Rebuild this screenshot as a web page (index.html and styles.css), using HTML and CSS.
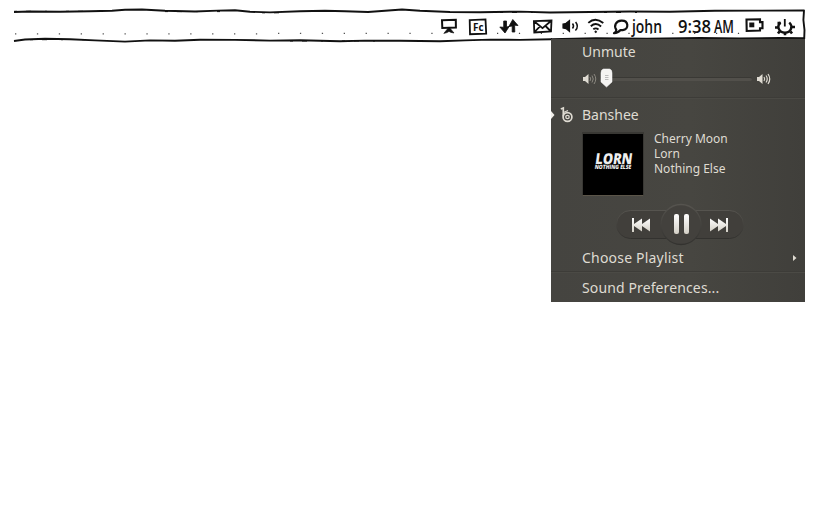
FILE: index.html
```html
<!DOCTYPE html>
<html lang="en">
<head>
<meta charset="utf-8">
<title>Sound menu</title>
<link rel="stylesheet" href="styles.css">
</head>
<body>
<header class="bar">
  <svg class="frame" width="825" height="50" viewBox="0 0 825 50" fill="none" stroke="#111">
    <path stroke-width="1.9" stroke-linejoin="round" d="M14 12L30 11.500 60 11.700 90 11.300 112 10.800 125 9.800 142 9.500 165 10.700 195 11.500 218 10.600 235 10.300 250 11.800 270 12.400 300 11.300 325 10.700 345 11.200 368 12 385 10.700 402 9.500 420 10.800 450 12 480 12.200 520 11.600 550 12.500 590 12 630 11.500 670 11.800 715 10.800 760 10.600 804 10.400 803.400 20 804.500 30 804.200 39"/>
    <path stroke-width="1.9" d="M14 41L25 39.500 45 38.700 70 39.200 95 40.400 125 41.600 150 40.400 175 40.700 200 39.800 235 39.900 270 40.600 300 40.200 320 40.700 340 41.300 365 40.600 400 40.800 440 41.200 465 40.400 490 39.600 520 39.900 552 39.200"/>
    <path stroke-width="1.8" d="M551 39.200L596 38.200 647 38.600 700 37.800 740 38.400 780 37.900 804 38.200"/>
    <path stroke-width="1" stroke-dasharray="3 9 5 14 2 19" d="M14 11.300h90M165 11.600h60M262 12.800h30M500 12.500h150M30 39.700h60M290 41h100"/>
    <path stroke="#555" stroke-width="1.300" stroke-dasharray="1.300 20.600" d="M15 33.900h255M278 33.400h160"/>
    <path stroke="#444" stroke-width="1.200" stroke-dasharray="1.200 20.700" d="M497 33.300h250"/>
  </svg>
  <div class="tray">
    <svg class="i-screen" width="18" height="18" viewBox="0 0 18 18"><path d="M2 2.300L15.800 1.800 15.900 9.500 2.300 10z" fill="none" stroke="#111" stroke-width="2"/><path d="M9 9l5 6-3-.6-2-1-2 1.200-3.200.8z" fill="#111" stroke="#111" stroke-width=".6"/></svg>
    <svg class="i-fc" width="20" height="18" viewBox="0 0 20 18"><path d="M1.700 2.200L17.500 1.400 18.200 15.600 2 16.200z" fill="none" stroke="#111" stroke-width="1.800"/><text x="5" y="13" textLength="10.500" lengthAdjust="spacingAndGlyphs" class="hand small">Fc</text></svg>
    <svg class="i-arrows" width="20" height="18" viewBox="0 0 20 18"><path d="M4.700 3h2.800v6l2.700-.6L6 15 .8 9 4.700 9.300zM13.800 1.500L19 7.500l-3.400-.3.200 6.800h-2.600V8L9.800 8.600z" fill="#111" stroke="#111" stroke-width=".8" stroke-linejoin="round"/></svg>
    <svg class="i-mail" width="20" height="16" viewBox="0 0 20 16" fill="none" stroke="#111" stroke-width="1.800"><path d="M.9 2.200L18.500 1.500 18 12.500 1.300 13.500zM2 3l7.500 6.200L18 2M1.500 13l5.500-5.700M18 12.500l-5-5"/></svg>
    <svg class="i-vol" width="17" height="16" viewBox="0 0 17 16"><path d="M1 6l2.500-.4L7.500 2.500v11L4 10.600 1 10z" fill="#111" stroke="#111" stroke-width="1.200"/><path d="M10.500 5.500q2 2.500 0 5M13.600 4q3.600 4.500-.2 8.500" fill="none" stroke="#111" stroke-width="1.500"/></svg>
    <svg class="i-wifi" width="18" height="16" viewBox="0 0 18 16" fill="none" stroke="#111" stroke-width="1.900"><path d="M1.300 4.900q7-6.300 15 .2M3.800 8.300q5-4.500 10.300.2M6.300 11.300q2.500-1.900 5.200.2"/><circle cx="8.700" cy="13.800" r=".8" fill="#111" stroke-width="1"/></svg>
    <svg class="i-chat" width="18" height="18" viewBox="0 0 18 18"><path d="M4.300 10.800C1.500 6.500 4 2 9.300 1.600c7.500-.4 8 8.700 1.500 9.500L8.500 11Q6 14 2 14.200q2.500-1.600 2.300-3.400z" fill="none" stroke="#111" stroke-width="2.200" stroke-linejoin="round"/></svg>
    <svg class="t-user" width="36" height="32" viewBox="0 0 36 32"><text x="2" y="22" textLength="30" lengthAdjust="spacingAndGlyphs" class="hand">john</text></svg>
    <svg class="t-time" width="64" height="32" viewBox="0 0 64 32"><text x="2" y="22" textLength="33" lengthAdjust="spacingAndGlyphs" class="hand">9:38</text><text x="38" y="22" textLength="20" lengthAdjust="spacingAndGlyphs" class="hand">AM</text></svg>
    <svg class="i-bat" width="20" height="15" viewBox="0 0 20 15"><path d="M1.500 1.500L15 1.300v2.800h2.500v6.200H15v2.200l-13.300.5z" fill="none" stroke="#111" stroke-width="2.100"/><path d="M4.300 4.500h5v4.800h-5z" fill="#111"/></svg>
    <svg class="i-power" width="22" height="20" viewBox="0 0 22 20" fill="none" stroke="#111"><path stroke-width="2.400" d="M6.500 4.500C2.500 8 4.500 14.700 11 14.700S19 8 15.300 4.500"/><path stroke-width="1.800" d="M10.800 1V8.500"/><path stroke-width="2.600" d="M1 9.500h3.500M17.500 9h3.500M11 15v2.300M5.500 13.500L4 15.500M16.500 13.500l1.500 2M6.700 5H3.500"/></svg>
  </div>
</header>
<main class="menu">
  <div class="item unmute">Unmute</div>
  <div class="volume">
    <svg width="15" height="14" viewBox="0 0 15 14"><path d="M1 5h2l3.500-3v10L3 9H1z" fill="#dfdbd2"/><path d="M8 5q1.500 2 0 4M10 3.500q2.500 3.500 0 7M12 2q3.500 5 0 10" fill="none" stroke="#8c8981"/></svg>
    <div class="track"><svg class="knob" width="13" height="20" viewBox="0 0 13 20"><path d="M3.500 1h6Q12 1.500 12 5v9l-5.500 5L1 14V5q0-3.500 2.500-4z" fill="#f5f4f2" stroke="#fff" stroke-width=".5"/><path d="M5 7.500h3.500M5 9.500h3.500M5 11.500h3.500" stroke="#bbb"/></svg></div>
    <svg width="15" height="14" viewBox="0 0 15 14"><path d="M1 5h2l3.500-3v10L3 9H1z" fill="#dfdbd2"/><path d="M8 5q1.500 2 0 4M10 3.500q2.500 3.500 0 7M12 2q3.500 5 0 10" fill="none" stroke="#dfdbd2" stroke-width="1.200"/></svg>
  </div>
  <div class="rule"></div>
  <div class="player">
    <svg class="pointer" width="4" height="8" viewBox="0 0 4 8"><path d="M0 0l3.500 4L0 8z" fill="#f1efea"/></svg>
    <svg class="logo" width="14" height="16" viewBox="0 0 14 16" fill="none" stroke="#dfdbd2"><path stroke-width="1.700" d="M.8 2L3.300 1v8.300"/><circle cx="7.500" cy="10" r="4.400" stroke-width="1.700"/><circle cx="7.500" cy="10" r="1.700" stroke-width="1.300"/><path stroke-width="1.300" d="M3.500 5.500L8 3.500"/></svg>
    <span class="item name">Banshee</span>
  </div>
  <div class="track-info">
    <div class="cover">
      <svg width="60" height="60" viewBox="0 0 60 60" fill="#eee"><g transform="skewX(-8)"><text x="16" y="30" textLength="37" lengthAdjust="spacingAndGlyphs" class="album">LORN</text><text x="16.500" y="35.500" textLength="36.500" lengthAdjust="spacingAndGlyphs" class="album-sub">NOTHING ELSE</text></g></svg>
    </div>
    <div class="meta"><div class="l1">Cherry Moon</div><div class="l2">Lorn</div><div class="l3">Nothing Else</div></div>
  </div>
  <div class="controls">
    <svg width="130" height="44" viewBox="0 0 130 44">
      <defs><linearGradient id="g" x2="0" y2="1"><stop stop-color="#fff"/><stop offset="1" stop-color="#d3cfc5"/></linearGradient><linearGradient id="rim" x2="0" y2="1"><stop stop-color="#56544f"/><stop offset="1" stop-color="#33322f"/></linearGradient></defs>
      <rect x="1.500" y="8.500" width="127" height="28" rx="14" fill="#413f3b" stroke="url(#rim)"/>
      <circle cx="66" cy="22.500" r="20" fill="#43413d" stroke="url(#rim)" stroke-width="1.300"/>
      <g fill="url(#g)"><path d="M17 16h2v6l8-5.500V22l8-5.500v13L27 24v5.500L19 24v6h-2z"/><path d="M113 16h-2v6l-8-5.500V22l-8-5.500v13l8-5.500v5.500l8-5.500v6h2z"/><rect x="59" y="12" width="5" height="20" rx="2"/><rect x="69" y="12" width="5" height="20" rx="2"/></g>
    </svg>
  </div>
  <div class="item playlist"><span>Choose Playlist</span><svg width="4" height="6" viewBox="0 0 4 6"><path d="M0 0l3.500 3L0 6z" fill="#dfdbd2"/></svg></div>
  <div class="rule"></div>
  <div class="item prefs">Sound Preferences...</div>
</main>
</body>
</html>
```
FILE: styles.css
```css
* { box-sizing: border-box; }
body { margin: 0; width: 825px; height: 532px; background: #fff; overflow: hidden; font-family: "Noto Sans", "Open Sans", sans-serif; }
svg { display: block; flex: none; overflow: visible; }
.bar { position: relative; height: 39px; }
.frame { position: absolute; left: 0; top: 0; }
.tray { position: relative; display: flex; align-items: flex-start; padding: 18px 0 0 440px; height: 39px; }
.i-fc { margin-left: 10px; }
.i-arrows { margin-left: 11px; }
.i-mail { margin: 1px 0 0 14px; }
.i-vol { margin-left: 9px; }
.i-wifi { margin-left: 8px; }
.i-chat { margin: 1px 0 0 7px; }
.t-user { margin: -7px 0 0 0; }
.t-time { margin: -7px 0 0 10px; }
.i-bat { margin-left: 5px; }
.i-power { margin: 0 0 0 9px; }
.hand { font: 600 18px "Open Sans", sans-serif; fill: #111; }
.hand.small { font-size: 11px; font-weight: 700; }
.menu { position: relative; width: 254px; height: 263px; margin-left: 551px; padding-top: 3px; background: linear-gradient(90deg, #454440, #474641 55%, #403f3b); color: #dfdbd2; }
.item { font-size: 14px; line-height: 20px; white-space: nowrap; }
.unmute { padding-left: 31px; }
.volume { display: flex; align-items: center; height: 35px; padding: 0 34px 1px 31px; gap: 3px; }
.volume > svg:last-child { margin-left: 1px; }
.track { position: relative; flex: 1; height: 4px; background: #52504b; border-top: 1px solid #3a3935; border-radius: 2px; }
.knob { position: absolute; left: 0; top: -10px; }
.rule { height: 2px; background: #3d3c38; border-bottom: 1px solid #4b4a45; }
.player { display: flex; align-items: center; height: 33px; padding-bottom: 1px; }
.logo { margin-left: 5px; }
.name { margin-left: 8px; }
.track-info { display: flex; padding-left: 31px; height: 70px; }
.cover { width: 62px; height: 64px; background: #000; border: 1px solid #393834; border-top-width: 2px; border-bottom: 1px solid #5b5549; }
.album { font: 800 15px "Open Sans", sans-serif; }
.album-sub { font: 800 6px "Open Sans", sans-serif; }
.meta { margin-top: -1px; padding: 0 0 0 10px; font-size: 12px; line-height: 15px; }
.controls { height: 44px; padding-left: 64px; }
.playlist { display: flex; align-items: center; justify-content: space-between; height: 25px; padding: 0 8px 1px 31px; letter-spacing: .2px; }
.prefs { padding: 5px 0 0 31px; letter-spacing: .12px; }
```
